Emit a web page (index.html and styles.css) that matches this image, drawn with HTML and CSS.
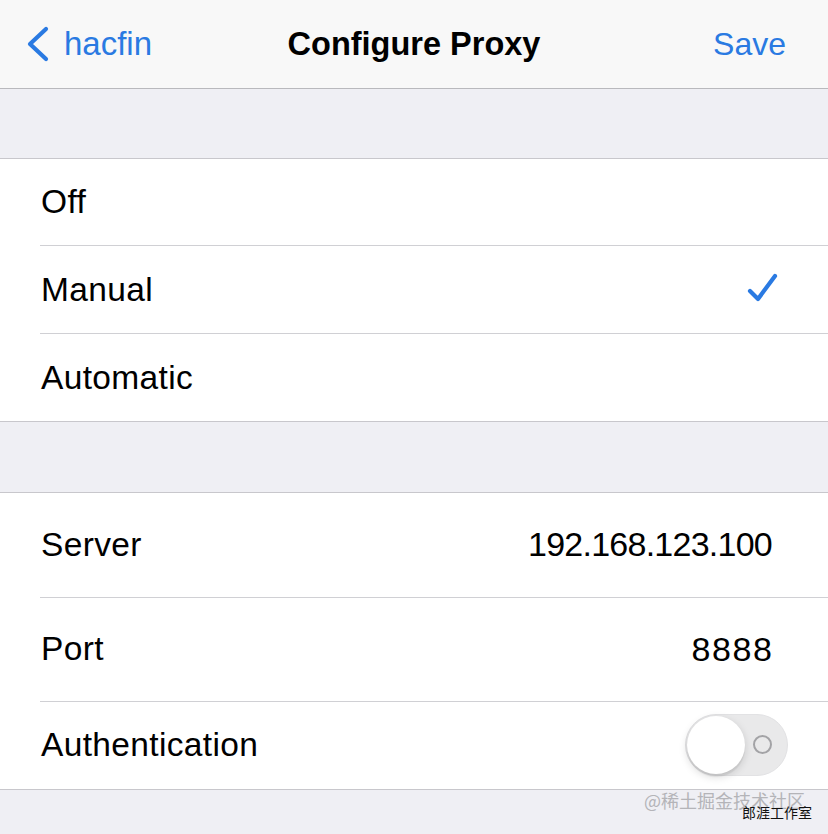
FILE: index.html
```html
<!DOCTYPE html>
<html>
<head>
<meta charset="utf-8">
<link rel="stylesheet" href="styles.css">
</head>
<body>
<div class="screen">
  <header class="nav">
    <div class="nav-left">
      <svg class="chev" width="28" height="36" viewBox="0 0 28 36"><path d="M22 3 L6 18 L22 33" fill="none" stroke="#2a7ae2" stroke-width="4.2" stroke-linecap="round" stroke-linejoin="round"/></svg>
      <span class="back">hacfin</span>
    </div>
    <div class="title">Configure Proxy</div>
    <div class="save">Save</div>
  </header>
  <div class="gap gap1"></div>
  <section class="group">
    <div class="row first"><span class="label">Off</span></div>
    <div class="row"><span class="label">Manual</span>
      <svg class="check" width="34" height="32" viewBox="0 0 34 32"><path d="M4 19 L12 27 L29 4" fill="none" stroke="#2a7ae2" stroke-width="4.2" stroke-linecap="round" stroke-linejoin="round"/></svg>
    </div>
    <div class="row"><span class="label">Automatic</span></div>
  </section>
  <div class="gap gap2"></div>
  <section class="group">
    <div class="row tall"><span class="label">Server</span><span class="value ip">192.168.123.100</span></div>
    <div class="row tall"><span class="label">Port</span><span class="value port">8888</span></div>
    <div class="row auth"><span class="label">Authentication</span>
      <div class="toggle"><div class="knob"></div><div class="ring"></div></div>
    </div>
  </section>
  <div class="gap gap3">
    <span class="wm1">@稀土掘金技术社区</span>
    <span class="wm2">郎涯工作室</span>
  </div>
</div>
</body>
</html>
```

FILE: styles.css
```css
html, body {
  margin: 0;
  padding: 0;
  background: #efeff4;
}
.screen {
  width: 828px;
  height: 834px;
  overflow: hidden;
  font-family: "Liberation Sans", Arial, sans-serif;
  color: #000;
}
.nav {
  height: 88px;
  background: #f8f8f8;
  border-bottom: 1px solid #b9b9bd;
  display: grid;
  grid-template-columns: 1fr auto 1fr;
  align-items: center;
  padding: 0 42px 0 24px;
}
.nav-left {
  display: flex;
  align-items: center;
  gap: 12px;
}
.chev { display: block; }
.back {
  color: #2a7ae2;
  font-size: 33px;
}
.title {
  font-weight: bold;
  font-size: 32.5px;
  padding-left: 18px;
}
.save {
  justify-self: end;
  color: #2a7ae2;
  font-size: 32px;
}
.gap {
  background: #efeff4;
}
.gap1 { height: 69px; }
.gap2 { height: 70px; }
.gap3 {
  height: 46px;
  position: relative;
}
.group {
  background: #fff;
  border-top: 1px solid #c8c7cc;
  border-bottom: 1px solid #c8c7cc;
  padding-left: 40px;
}
.row {
  height: 87px;
  display: flex;
  align-items: center;
  justify-content: space-between;
  padding-right: 56px;
  border-bottom: 1px solid #d0d0d4;
}
.row:last-child { border-bottom: none; }
.row.first { height: 86px; }
.row.tall { height: 103.5px; }
.row.auth { height: 86.5px; }
.label {
  font-size: 33.5px;
  letter-spacing: 0.35px;
  padding-left: 1px;
}
.value {
  font-size: 34px;
}
.ip { letter-spacing: -0.75px; }
.port { letter-spacing: 1.6px; margin-right: -1.6px; }
.check {
  margin-right: -8px;
  margin-top: -4px;
}
.toggle {
  width: 101px;
  height: 60px;
  border-radius: 31px;
  background: #e9e9ea;
  border: 1px solid #e2e2e4;
  position: relative;
  margin-right: -16px;
}
.knob {
  position: absolute;
  left: 1px;
  top: 1px;
  width: 58px;
  height: 58px;
  border-radius: 50%;
  background: #fff;
  box-shadow: 0 3px 8px rgba(0,0,0,0.15), 0 3px 1px rgba(0,0,0,0.06);
}
.ring {
  position: absolute;
  top: 20px;
  left: 67px;
  width: 19px;
  height: 19px;
  border-radius: 50%;
  border: 2px solid #a3a3a6;
  box-sizing: border-box;
}
.wm1 {
  position: absolute;
  left: 644px;
  top: -3px;
  font-family: "Noto Sans CJK SC", sans-serif;
  font-size: 18px;
  color: #b4b4b8;
  white-space: nowrap;
}
.wm2 {
  position: absolute;
  left: 742px;
  top: 12px;
  font-family: "Noto Sans CJK SC", sans-serif;
  font-size: 14px;
  color: #111;
  white-space: nowrap;
}
```
